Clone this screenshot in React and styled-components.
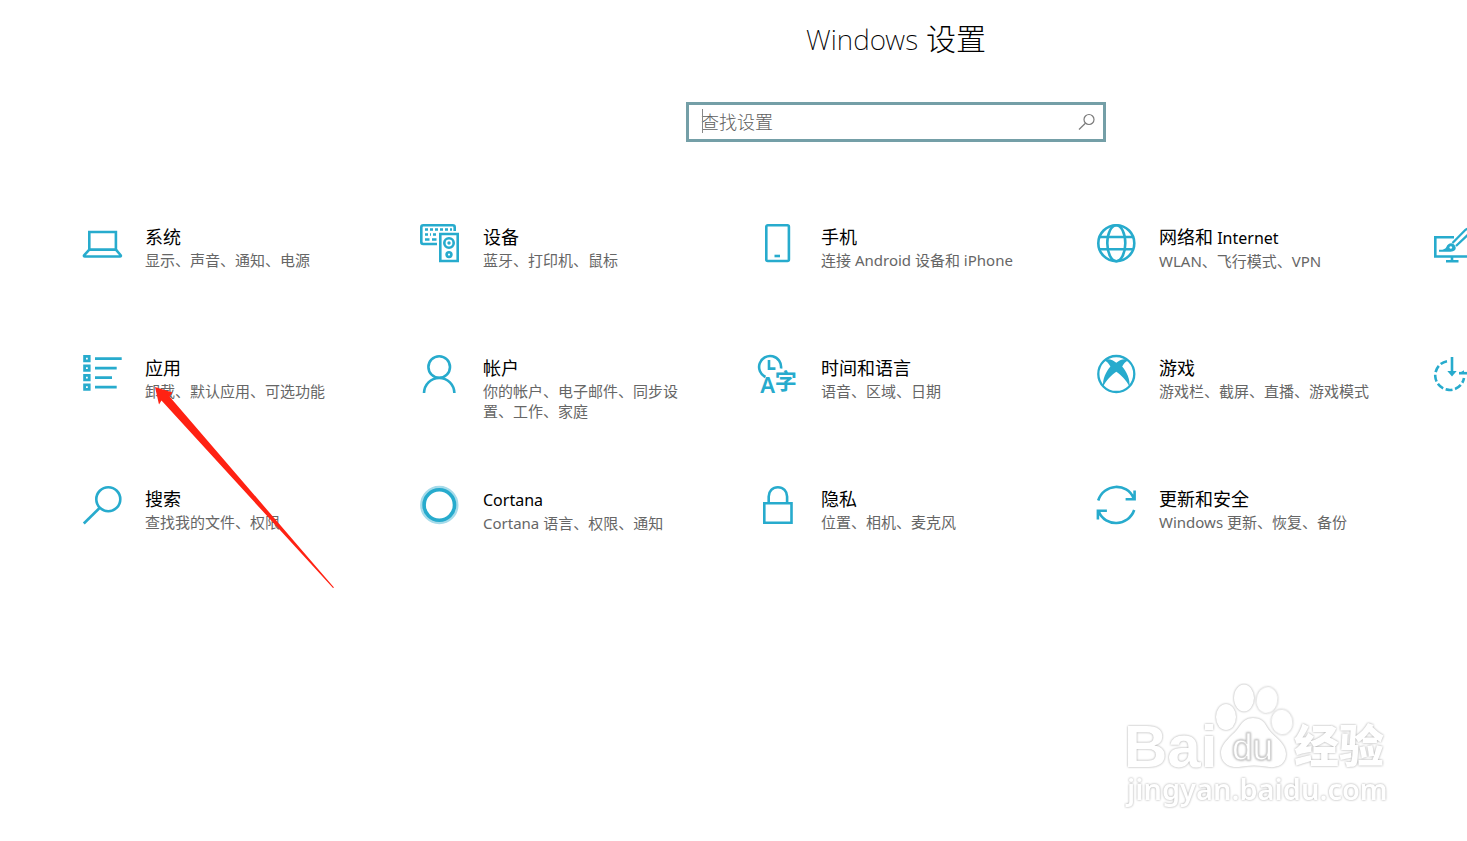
import React, { useState } from "react";
import styled, { createGlobalStyle } from "styled-components";

const ACCENT = "#27abcd";

const icons = {
  system: (
    <>
      <path d="M7.3 9h26.6v17.6H7.3z" />
      <path d="M7.3 26.6L2.3 32c-.7.8-.4 1.5.6 1.5h35c1 0 1.3-.7.6-1.5l-4.6-5.4" />
    </>
  ),
  devices: (
    <>
      <path d="M17 21H3.3Q1.3 21 1.3 19V4.3Q1.3 2.3 3.3 2.3H32.7Q34.7 2.3 34.7 4.3V8" />
      <path d="M5 6.5h27" strokeDasharray="3 2" />
      <path d="M5 11.500h6m2 0h3" strokeDasharray="3 2" />
      <path d="M5 16.500h4.500m2.500 0h4.500" />
      <path d="M20.3 11h17.400v27H20.3z" />
      <circle cx="29" cy="20" r="4.700" />
      <circle cx="29" cy="20" r="1.700" fill={ACCENT} stroke="none" />
      <circle cx="29" cy="31.600" r="2.400" />
    </>
  ),
  phone: (
    <>
      <rect x="8.3" y="2.3" width="22.6" height="35.7" rx="1.5" />
      <path d="M16.5 33h5.5" />
    </>
  ),
  network: (
    <>
      <circle cx="20.3" cy="20.2" r="18" />
      <ellipse cx="20.3" cy="20.2" rx="9" ry="18" />
      <path d="M3.5 14h33.6M3.5 26.3h33.6" />
    </>
  ),
  personalization: (
    <>
      <path d="M20 14.3H1.3v19.2H40M18 34v4M12 38.3h12.500" />
      <path
        d="M5 26.800c4 .2 6.500-.5 7.500-3 1.200-3.200 4.800-4.600 7.600-2.400 2.600 2.200 2 6-1.100 6.800-1.500.5-3 .6-5 .6H5z"
        fill={ACCENT}
        stroke="none"
      />
      <circle cx="16.800" cy="24.500" r="1.300" fill="#fff" stroke="none" />
      <path d="M18.500 20L31.500 6.800c2.800-2.300 6 .8 3.800 3.600L22 23" strokeWidth="2.300" />
    </>
  ),
  apps: (
    <>
      <path
        d="M2.600 2.400h4.600v4.400H2.600zM2.600 11.900h4.600v4.400H2.600zM2.600 21.400h4.600v4.400H2.600zM2.600 30.900h4.600v4.400H2.600z"
        strokeWidth="2.8"
      />
      <path d="M13 4.6h26.700M13 14.100h21.700M13 23.600h17M13 33.100h21.700" />
    </>
  ),
  accounts: (
    <>
      <circle cx="19.2" cy="13" r="10.8" />
      <path d="M4 39c.3-8.500 6.600-15 15.200-15s14.900 6.500 15.200 15" />
    </>
  ),
  time: (
    <>
      <path d="M7.500 23A11 11 0 1 1 23 14.500" />
      <path d="M11 6v8.600h6.500" />
      <IconText x="9.700" y="38.700" fontSize="22">A</IconText>
      <IconText x="27.800" y="35" fontSize="22">字</IconText>
    </>
  ),
  gaming: (
    <>
      <circle cx="20.3" cy="20" r="18" strokeWidth="2.3" />
      <path
        d="M8.500 6.500C12 3.500 17 6 20.300 8.800 23.600 6 28.600 3.500 32.100 6.500 29.500 7.500 27.800 9.600 26.200 12.400 30.500 17.500 34.500 25.500 33.400 32.500 30.500 26.500 25 21 20.300 17.800 15.600 21 10.100 26.500 7.200 32.500 6.100 25.500 10.100 17.500 14.400 12.400 12.800 9.600 11.100 7.500 8.500 6.500z"
        fill={ACCENT}
        stroke="none"
      />
    </>
  ),
  ease: (
    <>
      <path d="M13 7.2A14.500 14.500 0 1 0 30 24" strokeDasharray="7 2.600" />
      <path d="M18 3v17" />
      <path d="M13.300 17h9.400L18 22.500z" fill={ACCENT} stroke="none" />
      <path d="M25 19.200h15" />
      <path d="M25 19.200l5-3v3z" fill={ACCENT} stroke="none" />
    </>
  ),
  search: (
    <>
      <circle cx="26.3" cy="14.2" r="12" />
      <path d="M17.800 22.700L1.800 38.500" />
    </>
  ),
  cortana: (
    <>
      <circle cx="19.3" cy="20" r="17.2" stroke="#a6dbea" strokeWidth="4" />
      <circle cx="19.3" cy="20" r="15.2" strokeWidth="3.6" />
    </>
  ),
  privacy: (
    <>
      <path d="M6.300 18.300h27.200v19.500H6.300z" />
      <path d="M10.700 18v-6.500c0-5.200 3.800-9.200 9.200-9.200s9.200 4 9.200 9.200V18" />
    </>
  ),
  update: (
    <>
      <path d="M2.200 15.500C7.500-1.500 31-3 37.800 13.500M38.600 5.500v8.800h-9" />
      <path d="M38.200 25C32.500 41.500 9 42.500 2.800 26.500M1.900 34.500v-8.800h9" />
    </>
  ),
};

// Entries without a desc are icon only
const categories = [
  { id: "system", title: "系统", desc: "显示、声音、通知、电源" },
  { id: "devices", title: "设备", desc: "蓝牙、打印机、鼠标" },
  { id: "phone", title: "手机", desc: "连接 Android 设备和 iPhone" },
  { id: "network", title: "网络和", latin: " Internet", desc: "WLAN、飞行模式、VPN" },
  { id: "personalization", title: "个性化" },
  { id: "apps", title: "应用", desc: "卸载、默认应用、可选功能" },
  { id: "accounts", title: "帐户", desc: "你的帐户、电子邮件、同步设置、工作、家庭" },
  { id: "time", title: "时间和语言", desc: "语音、区域、日期" },
  { id: "gaming", title: "游戏", desc: "游戏栏、截屏、直播、游戏模式" },
  { id: "ease", title: "轻松使用" },
  { id: "search", title: "搜索", desc: "查找我的文件、权限" },
  { id: "cortana", title: "", latin: "Cortana", desc: "Cortana 语言、权限、通知" },
  { id: "privacy", title: "隐私", desc: "位置、相机、麦克风" },
  { id: "update", title: "更新和安全", desc: "Windows 更新、恢复、备份" },
];

function IconText(props) {
  return <IconGlyph textAnchor="middle" {...props} />;
}

const App = () => {
  const [query, setQuery] = useState("");

  return (
    <Window>
      <GlobalStyle />
      <Content>
        <Header>
          <Heading>
            <HeadingLatin>Windows</HeadingLatin> 设置
          </Heading>
          <SearchBox onSubmit={(e) => e.preventDefault()}>
            <SearchInput
              type="text"
              aria-label="查找设置"
              placeholder="查找设置"
              value={query}
              onChange={(e) => setQuery(e.target.value)}
            />
            {query === "" && <Caret />}
            <SearchButton type="submit" aria-label="搜索">
              <svg width="18" height="18" viewBox="0 0 18 18" fill="none" stroke="#7a7a7a" strokeWidth="1.2">
                <circle cx="11" cy="6.500" r="5" />
                <path d="M7.400 10.200L1 16.500" />
              </svg>
            </SearchButton>
          </SearchBox>
        </Header>

        {/* Settings categories */}
        <Grid>
          {categories.map((item) => (
            <Category
              key={item.id}
              href={`#${item.id}`}
              aria-label={item.desc ? undefined : item.title}
            >
              <Icon viewBox="0 0 40 40" aria-hidden="true">
                {icons[item.id]}
              </Icon>
              {item.desc && (
                <Labels>
                  <Title>
                    {item.title}
                    {item.latin && <TitleLatin>{item.latin}</TitleLatin>}
                  </Title>
                  <Description>{item.desc}</Description>
                </Labels>
              )}
              {item.id === "apps" && (
                <Arrow viewBox="0 0 180 202" aria-hidden="true">
                  <path d="M0 0L17.500 5.500 14.500 9.500 179 200.500 178 201 6.500 13.500 4 17.500z" />
                </Arrow>
              )}
            </Category>
          ))}
        </Grid>
      </Content>

      {/* Watermark */}
      <Watermark viewBox="0 0 270 130" aria-label="Baidu 经验">
        <g>
          <ellipse cx="102" cy="34" rx="10" ry="13" />
          <ellipse cx="120" cy="15" rx="10" ry="13.500" />
          <ellipse cx="143" cy="17" rx="10.500" ry="13" transform="rotate(8 143 17)" />
          <ellipse cx="158" cy="39" rx="10.500" ry="12.500" transform="rotate(-8 158 39)" />
          <path d="M129 35c7 0 11 3 14 9 4 8 19 15 19 27 0 10-8 14-17 13-10-2-20-2-30 0-11 1-18-5-18-14 0-11 13-18 18-26 4-6 8-9 14-9z" />
        </g>
        <Logo x="0" y="84" fontSize="60">Bai</Logo>
        <LogoDu x="108" y="77" fontSize="37">du</LogoDu>
        <LogoCn x="170" y="80" fontSize="45">经验</LogoCn>
        <LogoUrl x="3" y="117" fontSize="29">jingyan.baidu.com</LogoUrl>
      </Watermark>
    </Window>
  );
};

// Styled Components
const GlobalStyle = createGlobalStyle`
  * {
    box-sizing: border-box;
  }

  body {
    margin: 0;
    background: #fff;
    font-family: "Noto Sans", "Noto Sans CJK SC", sans-serif;
  }
`;

const Window = styled.main`
  position: relative;
  min-height: 100vh;
  overflow: hidden;
`;

const Content = styled.div`
  width: max-content;
  min-width: 100%;
`;

const Header = styled.header`
  display: flex;
  flex-direction: column;
  align-items: center;
  padding-top: 19px;
`;

const Heading = styled.h1`
  margin: 0 0 43px;
  font-size: 30px;
  font-weight: 300;
  line-height: 40px;
  color: #000;
`;

const HeadingLatin = styled.span`
  font-size: 28px;
  font-weight: 200;
`;

const SearchBox = styled.form`
  position: relative;
  display: flex;
  align-items: center;
  width: 420px;
  height: 40px;
  border: 3px solid #749fa7;
  background: #fff;
`;

const SearchInput = styled.input`
  flex: 1;
  min-width: 0;
  height: 100%;
  padding: 0 0 0 12px;
  border: none;
  outline: none;
  background: transparent;
  font-family: inherit;
  font-size: 18px;
  font-weight: 300;
  color: #000;

  &::placeholder {
    color: #606060;
    opacity: 1;
  }
`;

const Caret = styled.span`
  position: absolute;
  left: 13px;
  top: 4px;
  width: 1px;
  height: 24px;
  background: #888;
`;

const SearchButton = styled.button`
  display: flex;
  padding: 0 7px;
  border: none;
  background: none;
  cursor: pointer;
`;

const Grid = styled.nav`
  display: grid;
  grid-template-columns: repeat(5, minmax(338px, 1fr));
  grid-auto-rows: minmax(131px, auto);
  padding: 81px 51px 0;
`;

const Category = styled.a`
  position: relative;
  display: flex;
  align-items: flex-start;
  gap: 23px;
  padding: 0 24px 0 31px;
  color: inherit;
  text-decoration: none;
`;

const Icon = styled.svg`
  flex: none;
  width: 40px;
  height: 40px;
  overflow: visible;
  fill: none;
  stroke: ${ACCENT};
  stroke-width: 2.6;
`;

const IconGlyph = styled.text`
  fill: ${ACCENT};
  stroke: none;
  font-family: "Noto Sans", "Noto Sans CJK SC", sans-serif;
  font-weight: 600;
`;

const Labels = styled.div`
  width: 219px;
  padding-top: 2px;
`;

const Title = styled.div`
  font-size: 18px;
  line-height: 25px;
  color: #000;
`;

const TitleLatin = styled.span`
  font-size: 16px;
`;

const Description = styled.div`
  font-size: 15px;
  line-height: 20px;
  color: #666;
`;

const Arrow = styled.svg`
  position: absolute;
  left: 104px;
  top: 33px;
  width: 180px;
  height: 202px;
  z-index: 1;
  fill: #ff2213;
  pointer-events: none;
`;

const Watermark = styled.svg`
  position: absolute;
  right: 73px;
  bottom: 28px;
  width: 270px;
  height: 130px;
  fill: #fff;

  g > *,
  text {
    filter: drop-shadow(0 0 1px #a4a4a4);
  }
`;

const Logo = styled.text`
  font-family: "Liberation Sans", sans-serif;
  font-weight: 700;
`;

const LogoDu = styled(Logo)`
  font-weight: 400;
  stroke: #d4d4d4;
  stroke-width: 1;
`;

const LogoCn = styled.text`
  font-family: "Noto Sans CJK SC", sans-serif;
  font-weight: 900;
`;

const LogoUrl = styled.text`
  font-family: "Noto Sans", sans-serif;
  font-weight: 600;
`;

export default App;
